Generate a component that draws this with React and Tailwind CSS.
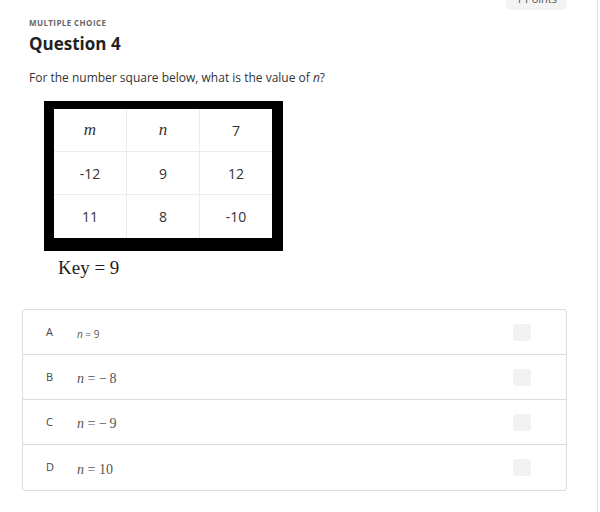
export default function App() {
  const rows = [
    ["m", "n", "7"],
    ["-12", "9", "12"],
    ["11", "8", "-10"],
  ];
  const opts = [
    { l: "A", sans: true, v: "9" },
    { l: "B", v: "\u2212\u20098" },
    { l: "C", v: "\u2212\u20099" },
    { l: "D", v: "10" },
  ];
  return (
    <div className="w-[600px] h-[512px] bg-white overflow-hidden font-['Open_Sans',sans-serif]">
      <div className="w-[598px] h-[512px] border-r border-[#e3e3e3]">
        <div className="flex justify-end h-[10px] pr-[30px]">
          <div className="-mt-[12px] h-[22px] px-[10px] rounded-[5px] bg-[#f3f3f3] text-[11px] leading-[22px] text-[#555]">
            1 Points
          </div>
        </div>
        <div className="pl-[29px]">
          <div className="mt-[7px] text-[8px] leading-[12px] font-bold tracking-[0.4px] text-[#666]">
            MULTIPLE CHOICE
          </div>
          <div className="mt-[3px] text-[17px] leading-[24px] font-bold text-[#222]">Question 4</div>
          <div className="mt-[14px] text-[12px] leading-[16px] text-[#333]">
            For the number square below, what is the value of <i>n</i>?
          </div>
          <div className="mt-[15px] ml-[15px] w-fit bg-black pt-[8px] pl-[10px] pr-[11px] pb-[13px]">
            <div className="grid grid-cols-[73px_73px_72px] grid-rows-[43px_43px_43px] bg-white">
              {rows.map((r, i) =>
                r.map((c, j) => (
                  <div
                    key={i + "-" + j}
                    className={
                      "flex items-center justify-center text-[14px] text-[#333] font-['Open_Sans',sans-serif] " +
                      (j < 2 ? "border-r border-[#ececec] " : "") +
                      (i < 2 ? "border-b border-[#ececec]" : "")
                    }
                  >
                    {i === 0 && j < 2 ? (
                      <span className="font-['Liberation_Serif',serif] italic text-[17px] text-[#333]">{c}</span>
                    ) : (
                      c
                    )}
                  </div>
                ))
              )}
            </div>
          </div>
          <div className="mt-[4px] ml-[29px] font-['Liberation_Serif',serif] text-[19px] leading-[26px] text-[#222]">
            Key = 9
          </div>
        </div>
        <div className="mt-[28px] ml-[22px] w-[545px] border border-[#dcdcdc] rounded-[3px]">
          {opts.map((o, i) => (
            <div
              key={o.l}
              className={
                "flex items-center h-[45px] " + (i < 3 ? "border-b border-[#dcdcdc]" : "")
              }
            >
              <div className="w-[54px] pl-[23px] text-[11px] text-[#444]">{o.l}</div>
              <div className="flex-1">
                {o.sans ? (
                  <span className="text-[10px] text-[#555]">
                    <i>n</i> = 9
                  </span>
                ) : (
                  <span className="font-['Liberation_Serif',serif] text-[14px] text-[#555]">
                    <i>n</i> = {o.v}
                  </span>
                )}
              </div>
              <div className="w-[18px] h-[17px] mr-[35px] rounded-[3px] bg-[#f2f2f2]" />
            </div>
          ))}
        </div>
      </div>
    </div>
  );
}
